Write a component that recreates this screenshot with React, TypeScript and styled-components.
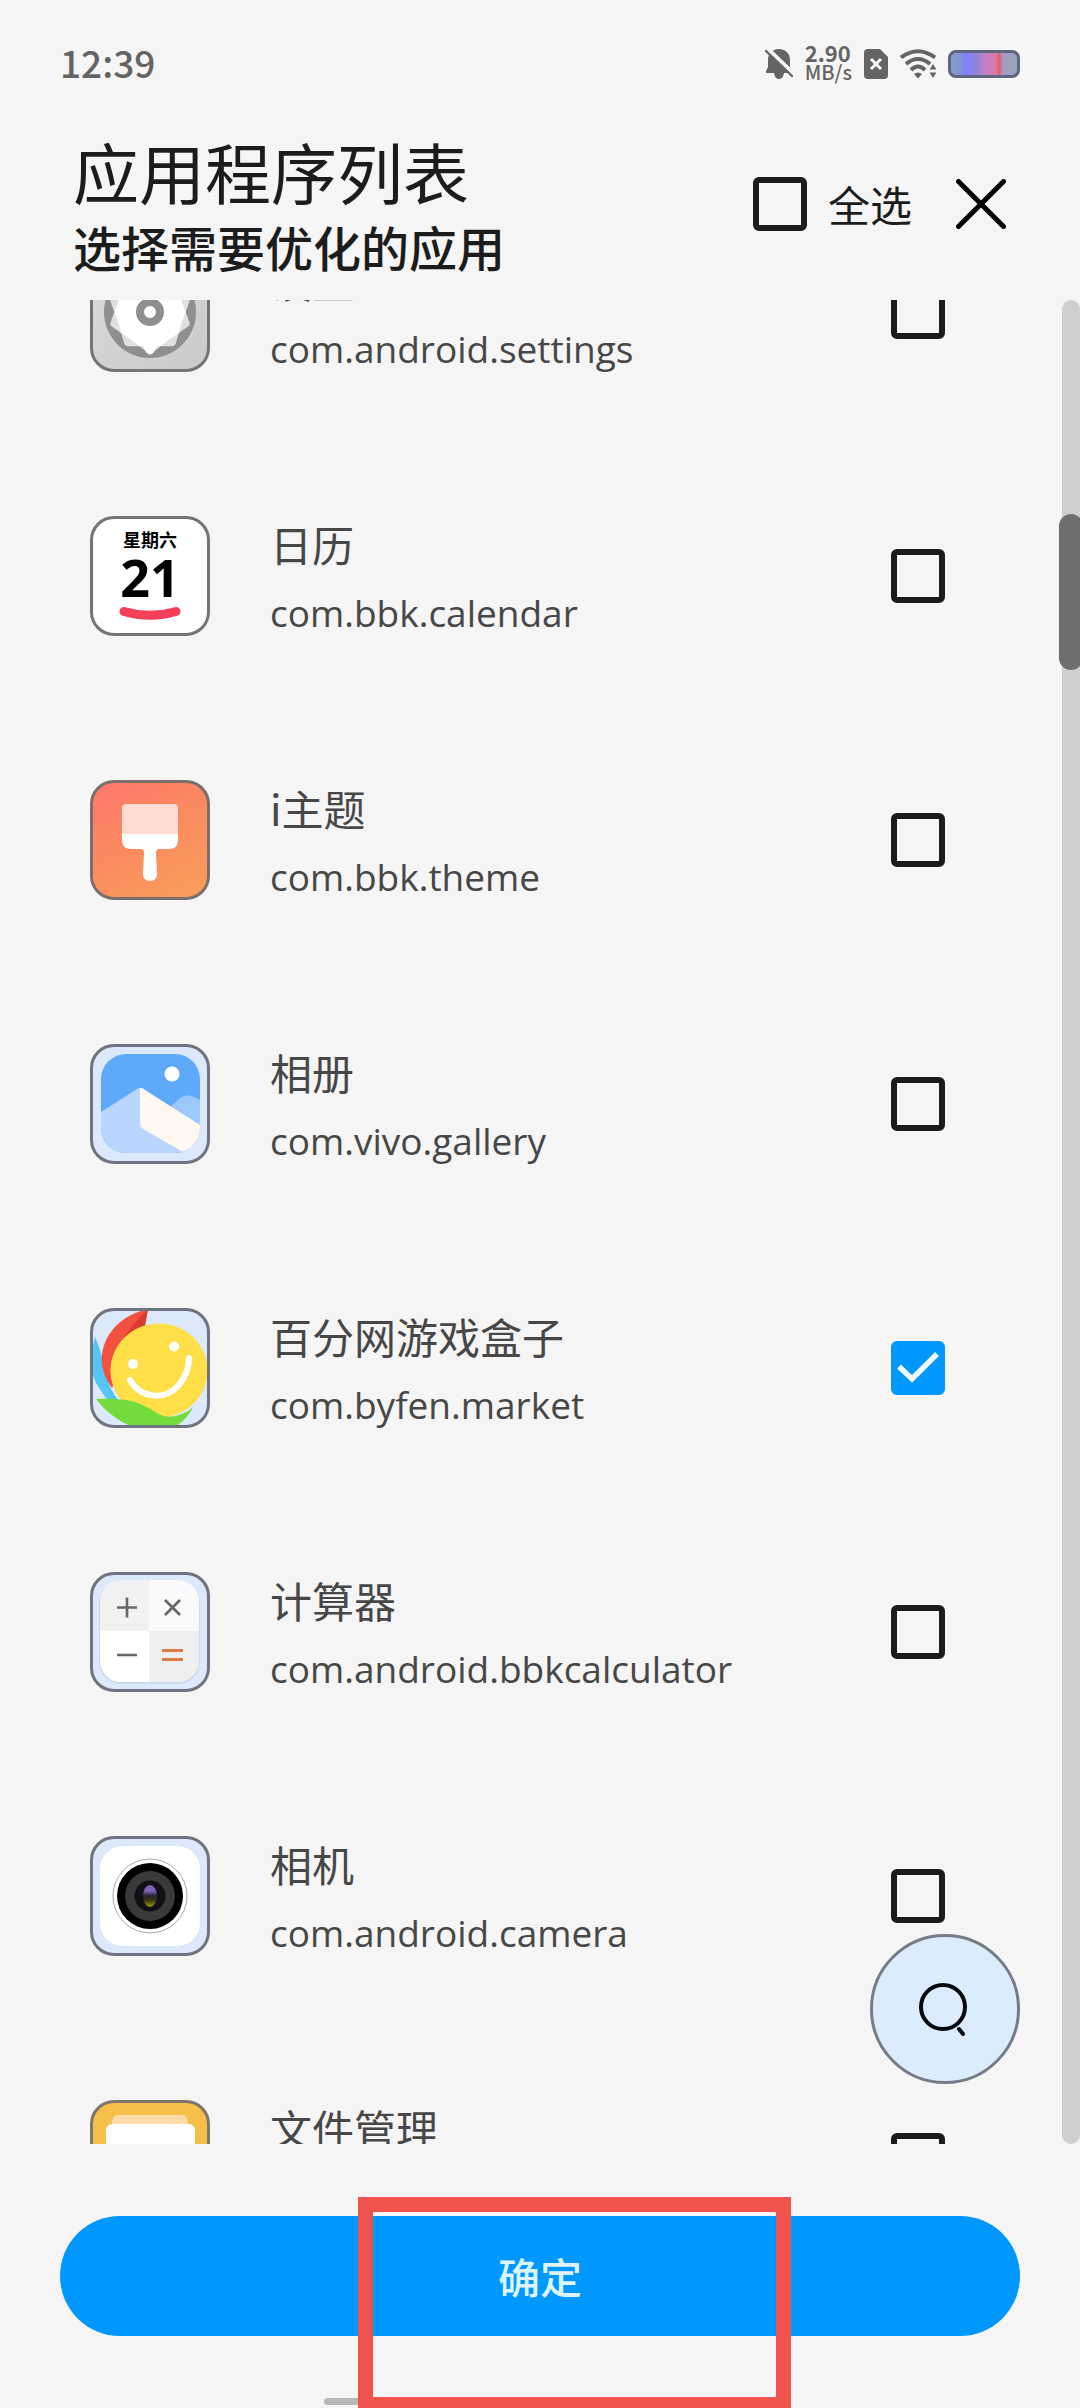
import React, { useLayoutEffect, useRef, useState } from "react";
import styled, { createGlobalStyle } from "styled-components";

const GlobalStyle = createGlobalStyle`
  *, *::before, *::after { box-sizing: border-box; }
  body {
    margin: 0;
    background: #f5f5f5;
    color: #1c1c1c;
    font-family: "Noto Sans CJK SC", "Noto Sans", sans-serif;
  }
`;

const Screen = styled.div`
  position: relative;
  display: flex;
  flex-direction: column;
  height: 100vh;
  overflow: hidden;
  background: #f5f5f5;
`;

/* ---------- status bar ---------- */

const StatusBar = styled.div`
  flex: none;
  display: flex;
  align-items: center;
  justify-content: space-between;
  height: 128px;
  padding: 0 60px;
  color: #646464;
`;

const Clock = styled.time`
  padding-bottom: 4px;
  font-size: 37px;
  line-height: 40px;
  font-weight: 500;
`;

const StatusIcons = styled.div`
  display: flex;
  align-items: center;
  gap: 12px;
`;

const NetSpeed = styled.div`
  display: flex;
  flex-direction: column;
  padding-bottom: 4px;
  font-size: 20px;
  line-height: 20px;
  font-weight: 500;
`;

const NetValue = styled.span`
  font-size: 22px;
  font-weight: 700;
`;

const Battery = styled.div`
  width: 72px;
  height: 28px;
  border: 3px solid #5f667f;
  border-radius: 8px;
  background: linear-gradient(
    90deg,
    #869bc8 0%,
    #8096d4 16%,
    #8080fa 20%,
    #8583f2 30%,
    #9383d0 40%,
    #b983cb 46%,
    #cb80be 58%,
    #d97aa8 68%,
    #e0606e 72%,
    #d96a78 75%,
    #a29cc0 78%,
    #9ba3bf 100%
  );
`;

/* ---------- header ---------- */

const Header = styled.header`
  flex: none;
  display: flex;
  align-items: center;
  justify-content: space-between;
  padding: 0 66px 0 73px;
  margin-bottom: 20px;
`;

const Title = styled.h1`
  margin: 0;
  font-size: 66px;
  line-height: 84px;
  font-weight: 400;
`;

const Subtitle = styled.p`
  margin: 0;
  font-size: 48px;
  line-height: 68px;
  font-weight: 500;
`;

const HeaderActions = styled.div`
  display: flex;
  align-items: center;
  gap: 36px;
`;

const SelectAll = styled.label`
  display: flex;
  align-items: center;
  gap: 21px;
  font-size: 42px;
  line-height: 66px;
`;

const CloseButton = styled.button`
  display: grid;
  place-items: center;
  width: 66px;
  height: 66px;
  padding: 0;
  border: 0;
  background: none;
  color: #000;
`;

/* ---------- check box ---------- */

const BoxWrap = styled.span`
  flex: none;
  display: grid;
  width: 54px;
  height: 54px;
  > * { grid-area: 1 / 1; }
`;

const BoxInput = styled.input`
  appearance: none;
  width: 54px;
  height: 54px;
  margin: 0;
  border: 6px solid #1c1c1c;
  border-radius: 6px;
  &:checked {
    border-color: #0098ff;
    background: #0098ff;
  }
`;

const Tick = styled.svg`
  pointer-events: none;
`;

function CheckBox(props: { id: string; checked: boolean; onChange: (v: boolean) => void }) {
  return (
    <BoxWrap>
      <BoxInput
        type="checkbox"
        id={props.id}
        checked={props.checked}
        onChange={(e) => props.onChange(e.target.checked)}
      />
      {props.checked && (
        <Tick width="54" height="54" viewBox="0 0 54 54" fill="none" stroke="#f0faff" strokeWidth="5.5">
          <path d="M8 25.5 21 38 46 13" />
        </Tick>
      )}
    </BoxWrap>
  );
}

/* ---------- list ---------- */

const ListArea = styled.main`
  position: relative;
  flex: 1;
  min-height: 0;
  display: flex;
  overflow: hidden;
`;

const List = styled.ul`
  flex: 1;
  margin: 0;
  padding: 0;
  list-style: none;
  overflow-y: auto;
  scrollbar-width: none;
`;

const Row = styled.label`
  display: flex;
  align-items: center;
  gap: 60px;
  height: 264px;
  padding: 0 117px 0 90px;
  color: #474747;
`;

const RowText = styled.span`
  flex: 1;
  min-width: 0;
  display: flex;
  flex-direction: column;
  padding-top: 8px;
`;

const AppName = styled.span`
  font-size: 42px;
  line-height: 66px;
`;

const PackageName = styled.span`
  font-family: "Open Sans", "Noto Sans", sans-serif;
  font-size: 37px;
  line-height: 72px;
`;

const IconFrame = styled.svg<{ $bg: string; $line: string }>`
  flex: none;
  width: 120px;
  height: 120px;
  border: 3px solid ${(p) => p.$line};
  border-radius: 24px;
  background: ${(p) => p.$bg};
  overflow: hidden;
`;

const Track = styled.div`
  flex: none;
  width: 18px;
  border-radius: 9px;
  background: #cfcfcf;
`;

const Thumb = styled.div`
  position: absolute;
  top: 214px;
  right: -3px;
  width: 24px;
  height: 156px;
  border-radius: 12px;
  background: #6e6e6e;
`;

const SearchButton = styled.button`
  position: absolute;
  right: 60px;
  bottom: 60px;
  display: grid;
  place-items: center;
  width: 150px;
  height: 150px;
  padding: 0;
  border: 3px solid #767b88;
  border-radius: 50%;
  background: #dbecfd;
  color: #05080f;
`;

/* ---------- footer ---------- */

const Footer = styled.footer`
  flex: none;
  display: flex;
  flex-direction: column;
  align-items: center;
  gap: 62px;
  padding: 72px 60px 3px;
`;

const ConfirmButton = styled.button`
  width: 100%;
  height: 120px;
  padding: 0;
  border: 0;
  border-radius: 60px;
  background: #0098ff;
  color: #dcf4ff;
  font-family: inherit;
  font-size: 42px;
  line-height: 66px;
  font-weight: 500;
`;

const HomeIndicator = styled.div`
  width: 432px;
  height: 7px;
  border-radius: 4px;
  background: #b9b9b9;
`;

const Highlight = styled.div`
  position: absolute;
  left: 358px;
  bottom: 0;
  width: 433px;
  height: 211px;
  border: 15px solid #f0524d;
  border-bottom-width: 11px;
  pointer-events: none;
`;

/* ---------- app icons ---------- */

const gearPath = (lobes: number, outer: number, inner: number, startDeg: number) => {
  const pts: string[] = [];
  for (let i = 0; i < lobes * 2; i++) {
    const a = ((startDeg + (i * 180) / lobes) * Math.PI) / 180;
    const r = i % 2 ? inner : outer;
    pts.push(`${(60 + r * Math.cos(a)).toFixed(1)} ${(60 + r * Math.sin(a)).toFixed(1)}`);
  }
  return `M${pts.join("L")}Z`;
};

const frame = (bg: string, line: string, children: React.ReactNode) => (
  <IconFrame $bg={bg} $line={line} viewBox="3 3 114 114" aria-hidden="true">
    {children}
  </IconFrame>
);

const SettingsIcon = () =>
  frame(
    "linear-gradient(135deg,#dadada,#cacaca)",
    "#747474",
    <>
      <circle cx="60" cy="60" r="46" fill="#8f8f8f" />
      <path d={gearPath(10, 38, 32, 90)} fill="#e0e0e0" stroke="#e0e0e0" strokeWidth="7" strokeLinejoin="round" />
      <path d={gearPath(10, 34, 32, 72)} fill="#fff" stroke="#fff" strokeWidth="3" strokeLinejoin="round" />
      <path d="M40 84Q52 90 56 100Q60 105 64 100Q68 90 80 84Z" fill="#fff" />
      <circle cx="60" cy="60" r="10" fill="#fff" stroke="#8f8f8f" strokeWidth="8" />
    </>
  );

const Weekday = styled.text`
  font-family: "Noto Sans CJK SC", sans-serif;
  font-size: 18px;
  font-weight: 700;
`;

const DayNumber = styled.text`
  font-family: "Noto Sans", sans-serif;
  font-size: 52px;
  font-weight: 700;
`;

const CalendarIcon = () =>
  frame(
    "#fff",
    "#747474",
    <>
      <Weekday x="60" y="31" textAnchor="middle">星期六</Weekday>
      <DayNumber x="60" y="81" textAnchor="middle">21</DayNumber>
      <path d="M34 95.500Q60 103 86 95.500" fill="none" stroke="#f43f5a" strokeWidth="9" strokeLinecap="round" />
    </>
  );

const ThemeIcon = () =>
  frame(
    "linear-gradient(150deg,#fd776b,#fa8c60 50%,#fb9e5a)",
    "#7c6f6b",
    <>
      <path d="M36 24H84Q88 24 88 28V54H32V28Q32 24 36 24Z" fill="#ffdcd2" />
      <path d="M32 54H88V60Q88 69 79 69H69Q66 69 66 73L67 94Q67 101 60 101Q53 101 53 94L54 73Q54 69 51 69H41Q32 69 32 60Z" fill="#fff" />
    </>
  );

const GalleryIcon = () =>
  frame(
    "#dbe9fb",
    "#6f7482",
    <>
      <clipPath id="galleryClip"><rect x="11" y="10" width="99" height="99" rx="25" /></clipPath>
      <g clipPath="url(#galleryClip)">
        <rect x="11" y="10" width="99" height="99" fill="#5ea9fa" />
        <circle cx="82" cy="30" r="7.5" fill="#fff" />
        <path d="M78 64Q83 61 88 56Q97 47 110 56V90H78Z" fill="#9cc8fb" />
        <path d="M11 68 47 45Q50 43 53 45L110 83V109H11Z" fill="#bad5fe" />
        <path d="M50 44Q52 43 55 46L110 81V109H95L53 85Q50 83 50 78Z" fill="#fff8f0" />
      </g>
    </>
  );

const ByfenIcon = () =>
  frame(
    "#dbe9fb",
    "#6f7482",
    <>
      <path d="M5 29Q-4 62 9 80Q14 88 20 94L29 93Q19 82 15 62Q11 42 5 29Z" fill="#56c5f5" />
      <path d="M58 1Q28 8 16 32Q5 58 22 80L40 40L54 22Z" fill="#f2513f" />
      <path d="M58 1Q40 18 30 36L54 24Q56 12 58 1Z" fill="#d93c30" />
      <ellipse cx="69" cy="62.5" rx="48.5" ry="47" fill="#ffdf47" />
      <path d="M6 91Q34 90 48 95Q58 99 67 105Q78 112 92 106Q98 104 103 99Q97 112 83 120H46Q22 112 6 91Z" fill="#73db3c" />
      <circle cx="43" cy="56" r="5" fill="#fff" />
      <circle cx="84" cy="38.500" r="5" fill="#fff" />
      <path d="M40 72C50 90 74 93 88 78Q99 65 99 50" fill="none" stroke="#fff" strokeWidth="6" strokeLinecap="round" />
    </>
  );

const CalculatorIcon = () =>
  frame(
    "#dbe9fb",
    "#6f7482",
    <>
      <clipPath id="calcClip"><rect x="10" y="8" width="99" height="102" rx="21" /></clipPath>
      <rect x="9" y="9" width="101" height="103" rx="22" fill="#cbdaee" />
      <g clipPath="url(#calcClip)">
        <rect x="10" y="8" width="49" height="51" fill="#f1f1f2" />
        <rect x="59" y="8" width="50" height="51" fill="#fafafd" />
        <rect x="10" y="59" width="49" height="51" fill="#fff" />
        <rect x="59" y="59" width="50" height="51" fill="#f0eff0" />
      </g>
      <path d="M27 35.500H47M37 25.500V45.500M75 28 90 43M90 28 75 43M27 83H47" stroke="#666" strokeWidth="2.6" fill="none" />
      <path d="M72 78.500H93M72 87.500H93" stroke="#df7a42" strokeWidth="2.8" />
    </>
  );

const CameraIcon = () =>
  frame(
    "#dbe9fb",
    "#6f7482",
    <>
      <defs>
        <linearGradient id="lens" x1="0" y1="0" x2="0" y2="1">
          <stop offset="0" stopColor="#7f5bb5" />
          <stop offset="0.25" stopColor="#8465c0" />
          <stop offset="0.5" stopColor="#25232e" />
          <stop offset="0.7" stopColor="#3a370f" />
          <stop offset="1" stopColor="#a89a18" />
        </linearGradient>
      </defs>
      <rect x="10" y="10" width="100" height="100" rx="23" fill="#fff" />
      <circle cx="60" cy="60" r="37" fill="#fff" stroke="#a9a9a9" strokeWidth="1" />
      <circle cx="60" cy="60" r="33" fill="#000" />
      <circle cx="60" cy="60" r="25" fill="#3b393a" />
      <circle cx="60" cy="60" r="15.500" fill="#111015" />
      <ellipse cx="60" cy="60" rx="7" ry="11" fill="url(#lens)" />
    </>
  );

const FilesIcon = () =>
  frame(
    "#f6bf4a",
    "#80766b",
    <>
      <path d="M28 15H92Q98 15 98 24H22Q22 15 28 15Z" fill="#fcdcac" />
      <rect x="16" y="24" width="89" height="80" rx="6" fill="#fff" />
    </>
  );

/* ---------- data ---------- */

const apps = [
  { name: "设置", pkg: "com.android.settings", Icon: SettingsIcon },
  { name: "日历", pkg: "com.bbk.calendar", Icon: CalendarIcon },
  { name: "i主题", pkg: "com.bbk.theme", Icon: ThemeIcon },
  { name: "相册", pkg: "com.vivo.gallery", Icon: GalleryIcon },
  { name: "百分网游戏盒子", pkg: "com.byfen.market", Icon: ByfenIcon },
  { name: "计算器", pkg: "com.android.bbkcalculator", Icon: CalculatorIcon },
  { name: "相机", pkg: "com.android.camera", Icon: CameraIcon },
  { name: "文件管理", pkg: "com.android.filemanager", Icon: FilesIcon },
];

const StatusGlyphs = () => (
  <StatusIcons>
    <svg width="28" height="32" viewBox="0 0 28 32" fill="#646464">
      <path d="M14 1C20 1 25 5 25 12V20L28 25H19Q18 31 14 31Q10 31 9 25H1V23L3 19V12C3 5 8 1 14 1Z" />
      <path d="M2 0 30 27" stroke="#f5f5f5" strokeWidth="4" />
      <path d="M1 3 27 28" stroke="#646464" strokeWidth="2.4" strokeLinecap="round" />
    </svg>
    <NetSpeed>
      <NetValue>2.90</NetValue>
      <span>MB/s</span>
    </NetSpeed>
    <svg width="24" height="30" viewBox="0 0 24 30">
      <path d="M4 0H16L24 8V26Q24 30 20 30H4Q0 30 0 26V4Q0 0 4 0Z" fill="#646464" />
      <path d="M7 10 17 20M17 10 7 20" stroke="#f5f5f5" strokeWidth="3" />
    </svg>
    <svg width="36" height="30" viewBox="0 0 36 30" fill="none" stroke="#646464" strokeWidth="4">
      <path d="M1 8.500Q18 -4 35 8.500" />
      <path d="M6 15Q18 5 30 15" />
      <path d="M11 21Q18 14 25 21" />
      <path d="M14 25Q18 22 22 25L18 29.500Z" fill="#646464" stroke="none" />
      <path d="M33 15 36.500 20.500H29.500ZM33 29 36.500 23.500H29.500Z" fill="#646464" stroke="none" />
    </svg>
    <Battery />
  </StatusIcons>
);

export default function App() {
  const listRef = useRef<HTMLUListElement>(null);
  const [selected, setSelected] = useState<string[]>(["com.byfen.market"]);

  useLayoutEffect(() => {
    if (listRef.current) listRef.current.scrollTop = 120;
  }, []);

  const toggle = (pkg: string, on: boolean) =>
    setSelected((s) => (on ? [...s, pkg] : s.filter((p) => p !== pkg)));

  return (
    <Screen>
      <GlobalStyle />
      <StatusBar>
        <Clock>12:39</Clock>
        <StatusGlyphs />
      </StatusBar>
      <Header>
        <div>
          <Title>应用程序列表</Title>
          <Subtitle>选择需要优化的应用</Subtitle>
        </div>
        <HeaderActions>
          <SelectAll htmlFor="select-all">
            <CheckBox
              id="select-all"
              checked={selected.length === apps.length}
              onChange={(on) => setSelected(on ? apps.map((a) => a.pkg) : [])}
            />
            全选
          </SelectAll>
          <CloseButton type="button" aria-label="关闭">
            <svg width="50" height="50" viewBox="0 0 50 50" stroke="currentColor" strokeWidth="5" strokeLinecap="round">
              <path d="M2.500 2.500 47.500 47.500M47.500 2.500 2.500 47.500" />
            </svg>
          </CloseButton>
        </HeaderActions>
      </Header>
      <ListArea>
        <List ref={listRef}>
          {apps.map(({ name, pkg, Icon }) => (
            <li key={pkg}>
              <Row htmlFor={pkg}>
                <Icon />
                <RowText>
                  <AppName>{name}</AppName>
                  <PackageName>{pkg}</PackageName>
                </RowText>
                <CheckBox id={pkg} checked={selected.includes(pkg)} onChange={(on) => toggle(pkg, on)} />
              </Row>
            </li>
          ))}
        </List>
        <Track />
        <Thumb />
        <SearchButton type="button" aria-label="搜索">
          <svg width="54" height="54" viewBox="0 0 54 54" fill="none" stroke="currentColor" strokeWidth="4" strokeLinecap="round">
            <circle cx="25" cy="25" r="22" />
            <path d="M41 47 45 52" />
          </svg>
        </SearchButton>
      </ListArea>
      <Footer>
        <ConfirmButton type="button">确定</ConfirmButton>
        <HomeIndicator />
      </Footer>
      <Highlight />
    </Screen>
  );
}
